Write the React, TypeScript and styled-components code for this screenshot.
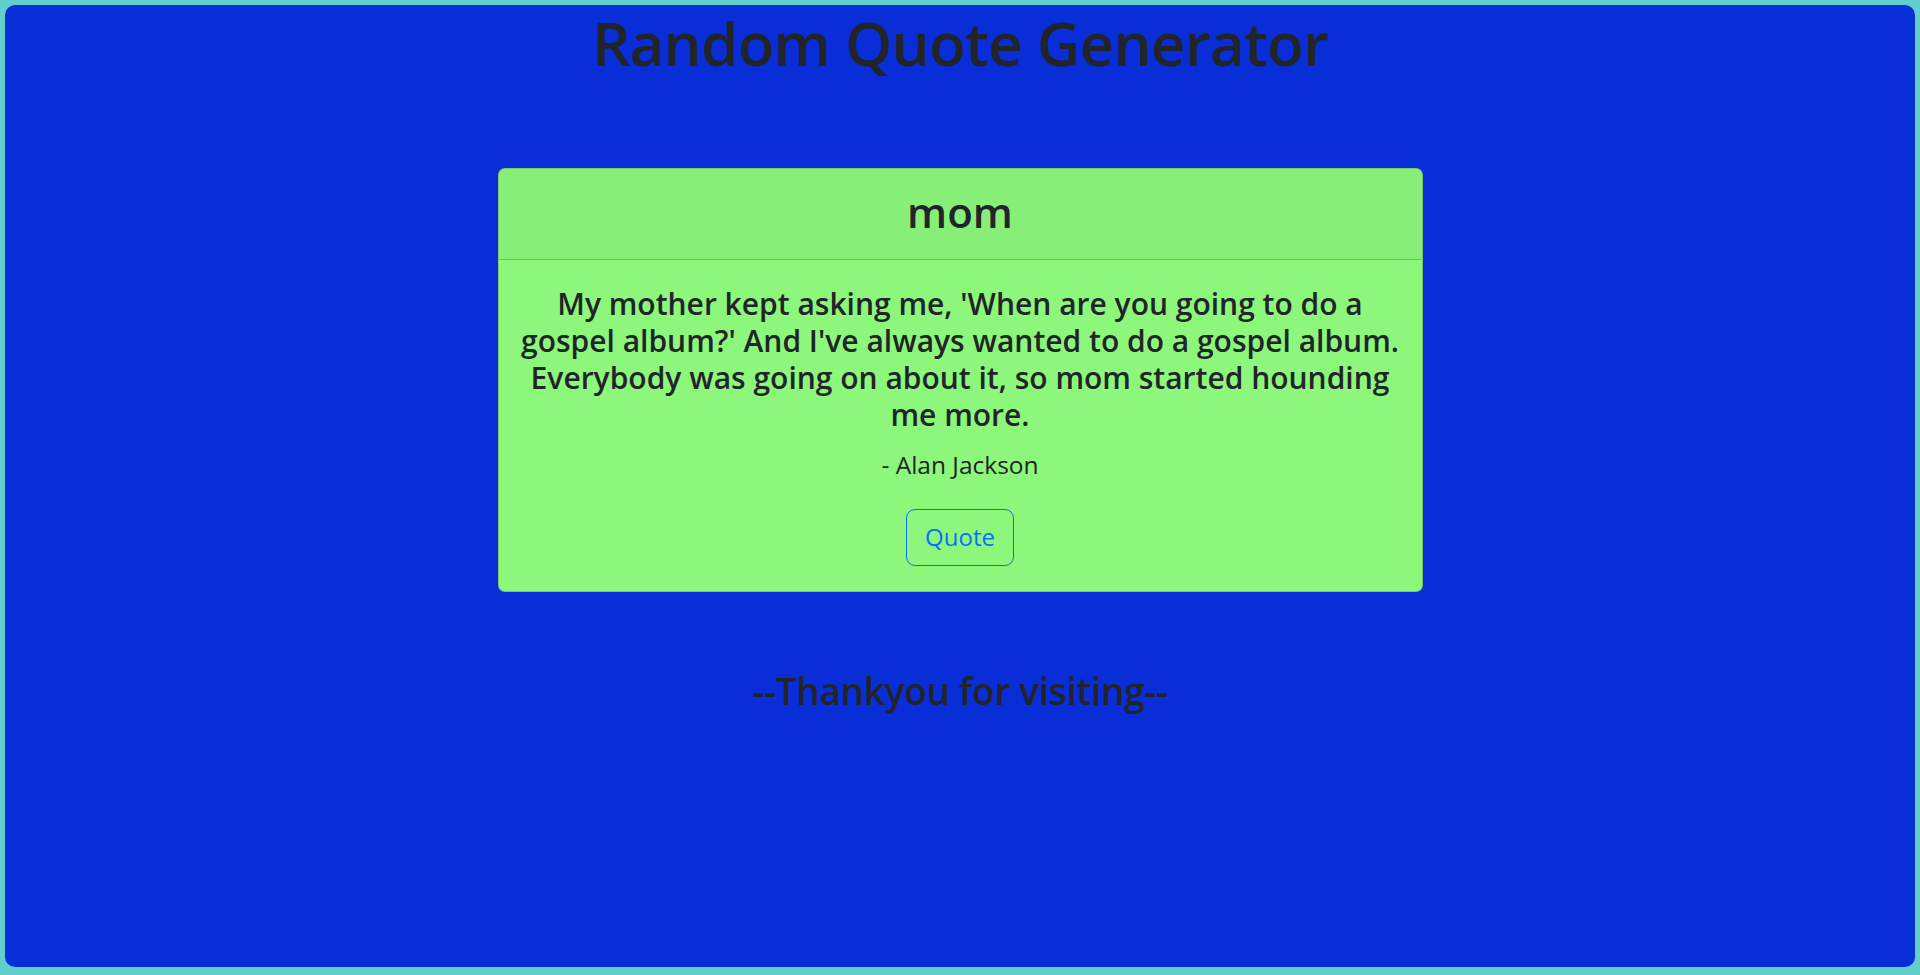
import React from "react";
import styled, { createGlobalStyle } from "styled-components";

const GlobalStyle = createGlobalStyle`
  html, body {
    margin: 0;
    padding: 0;
    background: #62cfcc;
  }
  body {
    font-family: "Open Sans", "Noto Sans", "Liberation Sans", sans-serif;
    color: #212529;
  }
  * { box-sizing: border-box; }
`;

const Page = styled.div`
  margin: 5px;
  height: 962px;
  background: #092dd6;
  border-radius: 10px;
  display: flex;
  flex-direction: column;
  align-items: center;
`;

const Title = styled.h1`
  margin: 0;
  padding-top: 2px;
  font-size: 60px;
  font-weight: 600;
  line-height: 1.2;
  color: #212529;
  letter-spacing: -0.7px;
`;

const Card = styled.div`
  margin-top: 89px;
  width: 925px;
  background: #8cf77b;
  border: 1px solid rgba(0, 0, 0, 0.175);
  border-radius: 7px;
  overflow: hidden;
  text-align: center;
`;

const CardHeader = styled.div`
  background: rgba(0, 0, 0, 0.03);
  border-bottom: 1px solid rgba(0, 0, 0, 0.175);
  height: 91px;
  padding-bottom: 4px;
  display: flex;
  align-items: center;
  justify-content: center;
`;

const Category = styled.h2`
  margin: 0;
  font-size: 42px;
  font-weight: 600;
  line-height: 1.2;
`;

const CardBody = styled.div`
  padding: 25px 16px 25px;
  display: flex;
  flex-direction: column;
  align-items: center;
`;

const QuoteText = styled.p`
  margin: 0;
  font-size: 30px;
  font-weight: 600;
  line-height: 37px;
`;

const Author = styled.p`
  margin: 14px 0 0;
  font-size: 24.5px;
  font-weight: 400;
  line-height: 1.5;
`;

const QuoteButton = styled.button`
  margin-top: 25px;
  width: 108px;
  height: 57px;
  background: transparent;
  border: 1px solid #0d6efd;
  border-radius: 9px;
  color: #0d6efd;
  font-family: inherit;
  font-size: 24px;
  line-height: 1.5;
  cursor: pointer;
`;

const Footer = styled.h3`
  margin: 77px 0 0;
  font-size: 37px;
  font-weight: 600;
  line-height: 1.2;
  color: #212529;
  letter-spacing: -0.3px;
`;

export default function App() {
  return (
    <>
      <GlobalStyle />
      <Page>
        <Title>Random Quote Generator</Title>
        <Card>
          <CardHeader>
            <Category>mom</Category>
          </CardHeader>
          <CardBody>
            <QuoteText>
              My mother kept asking me, 'When are you going to do a gospel album?' And I've always wanted to do a gospel album. Everybody was going on about it, so mom started hounding me more.
            </QuoteText>
            <Author>- Alan Jackson</Author>
            <QuoteButton>Quote</QuoteButton>
          </CardBody>
        </Card>
        <Footer>--Thankyou for visiting--</Footer>
      </Page>
    </>
  );
}
